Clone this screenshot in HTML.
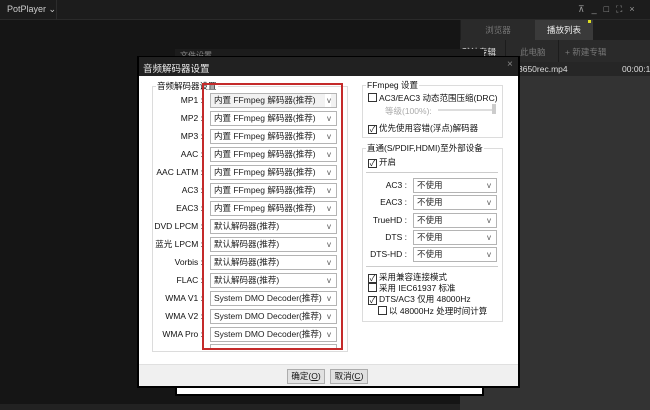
<!DOCTYPE html><html><head><meta charset="utf-8"><style>
*{margin:0;padding:0;box-sizing:border-box}
body{width:650px;height:410px;overflow:hidden;background:#151515;font-family:"Liberation Sans","Noto Sans CJK SC",sans-serif;font-size:8.5px;color:#111;position:relative}
.a{position:absolute;white-space:nowrap}
.sel{position:absolute;height:15px;border:1px solid #b4b4b4;background:#fff;padding-left:3px;line-height:13px;font-size:8.5px;color:#222;overflow:hidden}
.sel:after{content:"v";position:absolute;right:5px;top:0;font-size:8px;color:#555;background:#fff;padding-left:2px}
.lab{position:absolute;width:50px;text-align:right;font-size:8.5px;line-height:15px}
.cb{display:inline-block;width:9px;height:9px;border:1px solid #333;vertical-align:-1px;margin-right:2px;font-size:8px;line-height:7px;text-align:center}
.grp{position:absolute;border:1px solid #dcdcdc}
.btn{position:absolute;height:15px;border:1px solid #adadad;background:#e1e1e1;text-align:center;line-height:13px;font-size:8.5px}
</style></head><body>
<div class="a" style="left:0;top:0;width:650px;height:20px;background:#1c1c1c;border-bottom:1px solid #2a2a2a"></div>
<div class="a" style="left:7px;top:4px;color:#ccc;font-size:9px">PotPlayer ⌄</div>
<div class="a" style="left:56px;top:0;width:1px;height:20px;background:#2c2c2c"></div>
<div class="a" style="left:578px;top:4px;color:#999;font-size:9px;letter-spacing:7px">⊼_□⛶×</div>
<div class="a" style="left:460px;top:20px;width:190px;height:390px;background:#333"></div>
<div class="a" style="left:460px;top:20px;width:190px;height:20px;background:#1e1e1e"></div>
<div class="a" style="left:461px;top:20px;width:74px;height:20px;background:#2a2a2a;color:#777;text-align:center;line-height:20px">浏览器</div>
<div class="a" style="left:535px;top:20px;width:58px;height:20px;background:#3a3a3a;color:#eee;text-align:center;line-height:20px">播放列表</div>
<div class="a" style="left:588px;top:20px;width:3px;height:3px;background:#dd2"></div>
<div class="a" style="left:460px;top:40px;width:190px;height:22px;background:#2a2a2a"></div>
<div class="a" style="left:462px;top:46px;color:#ddd">默认专辑</div>
<div class="a" style="left:505px;top:40px;width:1px;height:22px;background:#1c1c1c"></div>
<div class="a" style="left:520px;top:46px;color:#777">此电脑</div>
<div class="a" style="left:558px;top:40px;width:1px;height:22px;background:#1c1c1c"></div>
<div class="a" style="left:565px;top:46px;color:#777">+ 新建专辑</div>
<div class="a" style="left:460px;top:62px;width:190px;height:14px;background:#262626"></div>
<div class="a" style="left:518px;top:64px;color:#ddd">3650rec.mp4</div>
<div class="a" style="left:622px;top:64px;color:#ddd">00:00:13</div>
<div class="a" style="left:0;top:404px;width:460px;height:6px;background:#222"></div>
<div class="a" style="left:175px;top:49px;width:309px;height:347px;background:#fff;border:2px solid #000"></div>
<div class="a" style="left:175px;top:49px;width:309px;height:10px;background:#1c1c1c"></div>
<div class="a" style="left:180px;top:50px;color:#888;font-size:8px">文件设置</div>
<div class="a" style="left:137px;top:56px;width:383px;height:332px;background:#fff;border:2px solid #000"></div>
<div class="a" style="left:139px;top:57px;width:379px;height:19px;background:#212121"></div>
<div class="a" style="left:143px;top:61px;color:#eee;font-size:9.5px">音频解码器设置</div>
<div class="a" style="left:507px;top:59px;color:#888;font-size:10px">×</div>
<div class="a" style="left:139px;top:364px;width:379px;height:22px;background:#f0f0f0;border-top:1px solid #e0e0e0"></div>
<div class="btn" style="left:287px;top:369px;width:38px">确定(<u>O</u>)</div>
<div class="btn" style="left:330px;top:369px;width:38px">取消(<u>C</u>)</div>
<div class="grp" style="left:152px;top:86px;width:196px;height:266px"></div>
<div class="a" style="left:156px;top:80px;background:#fff;padding:0 1px">音频解码器设置</div>

<div class="lab" style="left:153px;top:93px">MP1 :</div><div class="sel" style="left:210px;top:93px;width:127px;background:#f2f2f2">内置 FFmpeg 解码器(推荐)</div>
<div class="lab" style="left:153px;top:111px">MP2 :</div><div class="sel" style="left:210px;top:111px;width:127px">内置 FFmpeg 解码器(推荐)</div>
<div class="lab" style="left:153px;top:129px">MP3 :</div><div class="sel" style="left:210px;top:129px;width:127px">内置 FFmpeg 解码器(推荐)</div>
<div class="lab" style="left:153px;top:147px">AAC :</div><div class="sel" style="left:210px;top:147px;width:127px">内置 FFmpeg 解码器(推荐)</div>
<div class="lab" style="left:143px;top:165px;width:60px">AAC LATM :</div><div class="sel" style="left:210px;top:165px;width:127px">内置 FFmpeg 解码器(推荐)</div>
<div class="lab" style="left:153px;top:183px">AC3 :</div><div class="sel" style="left:210px;top:183px;width:127px">内置 FFmpeg 解码器(推荐)</div>
<div class="lab" style="left:153px;top:201px">EAC3 :</div><div class="sel" style="left:210px;top:201px;width:127px">内置 FFmpeg 解码器(推荐)</div>
<div class="lab" style="left:143px;top:219px;width:60px">DVD LPCM :</div><div class="sel" style="left:210px;top:219px;width:127px">默认解码器(推荐)</div>
<div class="lab" style="left:143px;top:237px;width:60px">蓝光 LPCM :</div><div class="sel" style="left:210px;top:237px;width:127px">默认解码器(推荐)</div>
<div class="lab" style="left:153px;top:255px">Vorbis :</div><div class="sel" style="left:210px;top:255px;width:127px">默认解码器(推荐)</div>
<div class="lab" style="left:153px;top:273px">FLAC :</div><div class="sel" style="left:210px;top:273px;width:127px">默认解码器(推荐)</div>
<div class="lab" style="left:153px;top:291px">WMA V1 :</div><div class="sel" style="left:210px;top:291px;width:127px">System DMO Decoder(推荐)</div>
<div class="lab" style="left:153px;top:309px">WMA V2 :</div><div class="sel" style="left:210px;top:309px;width:127px">System DMO Decoder(推荐)</div>
<div class="lab" style="left:153px;top:327px">WMA Pro :</div><div class="sel" style="left:210px;top:327px;width:127px">System DMO Decoder(推荐)</div>
<div class="a" style="left:210px;top:344px;width:127px;height:4px;border:1px solid #b4b4b4;border-bottom:0"></div>
<div class="a" style="left:202px;top:83px;width:141px;height:267px;border:2px solid #c42a2a"></div>

<div class="grp" style="left:362px;top:85px;width:141px;height:53px"></div>
<div class="a" style="left:366px;top:79px;background:#fff;padding:0 1px">FFmpeg 设置</div>
<div class="a" style="left:368px;top:92px"><span class="cb"></span>AC3/EAC3 动态范围压缩(DRC)</div>
<div class="a" style="left:385px;top:105px;color:#aaa">等级(100%):</div>
<div class="a" style="left:438px;top:109px;width:58px;height:2px;background:#ddd"></div>
<div class="a" style="left:492px;top:104px;width:4px;height:10px;background:#ccc"></div>
<div class="a" style="left:368px;top:122px"><span class="cb">✓</span>优先使用容错(浮点)解码器</div>
<div class="grp" style="left:362px;top:148px;width:141px;height:174px"></div>
<div class="a" style="left:366px;top:142px;background:#fff;padding:0 1px">直通(S/PDIF,HDMI)至外部设备</div>
<div class="a" style="left:368px;top:156px"><span class="cb">✓</span>开启</div>
<div class="a" style="left:366px;top:172px;width:132px;height:1px;background:#ccc"></div>
<div class="lab" style="left:357px;top:178px">AC3 :</div><div class="sel" style="left:413px;top:178px;width:84px">不使用</div>
<div class="lab" style="left:357px;top:195px">EAC3 :</div><div class="sel" style="left:413px;top:195px;width:84px">不使用</div>
<div class="lab" style="left:357px;top:213px">TrueHD :</div><div class="sel" style="left:413px;top:213px;width:84px">不使用</div>
<div class="lab" style="left:357px;top:230px">DTS :</div><div class="sel" style="left:413px;top:230px;width:84px">不使用</div>
<div class="lab" style="left:357px;top:247px">DTS-HD :</div><div class="sel" style="left:413px;top:247px;width:84px">不使用</div>
<div class="a" style="left:366px;top:266px;width:132px;height:1px;background:#ccc"></div>
<div class="a" style="left:368px;top:271px"><span class="cb">✓</span>采用兼容连接模式</div>
<div class="a" style="left:368px;top:282px"><span class="cb"></span>采用 IEC61937 标准</div>
<div class="a" style="left:368px;top:293px"><span class="cb">✓</span>DTS/AC3 仅用 48000Hz</div>
<div class="a" style="left:378px;top:305px"><span class="cb"></span>以 48000Hz 处理时间计算</div>
</body></html>
